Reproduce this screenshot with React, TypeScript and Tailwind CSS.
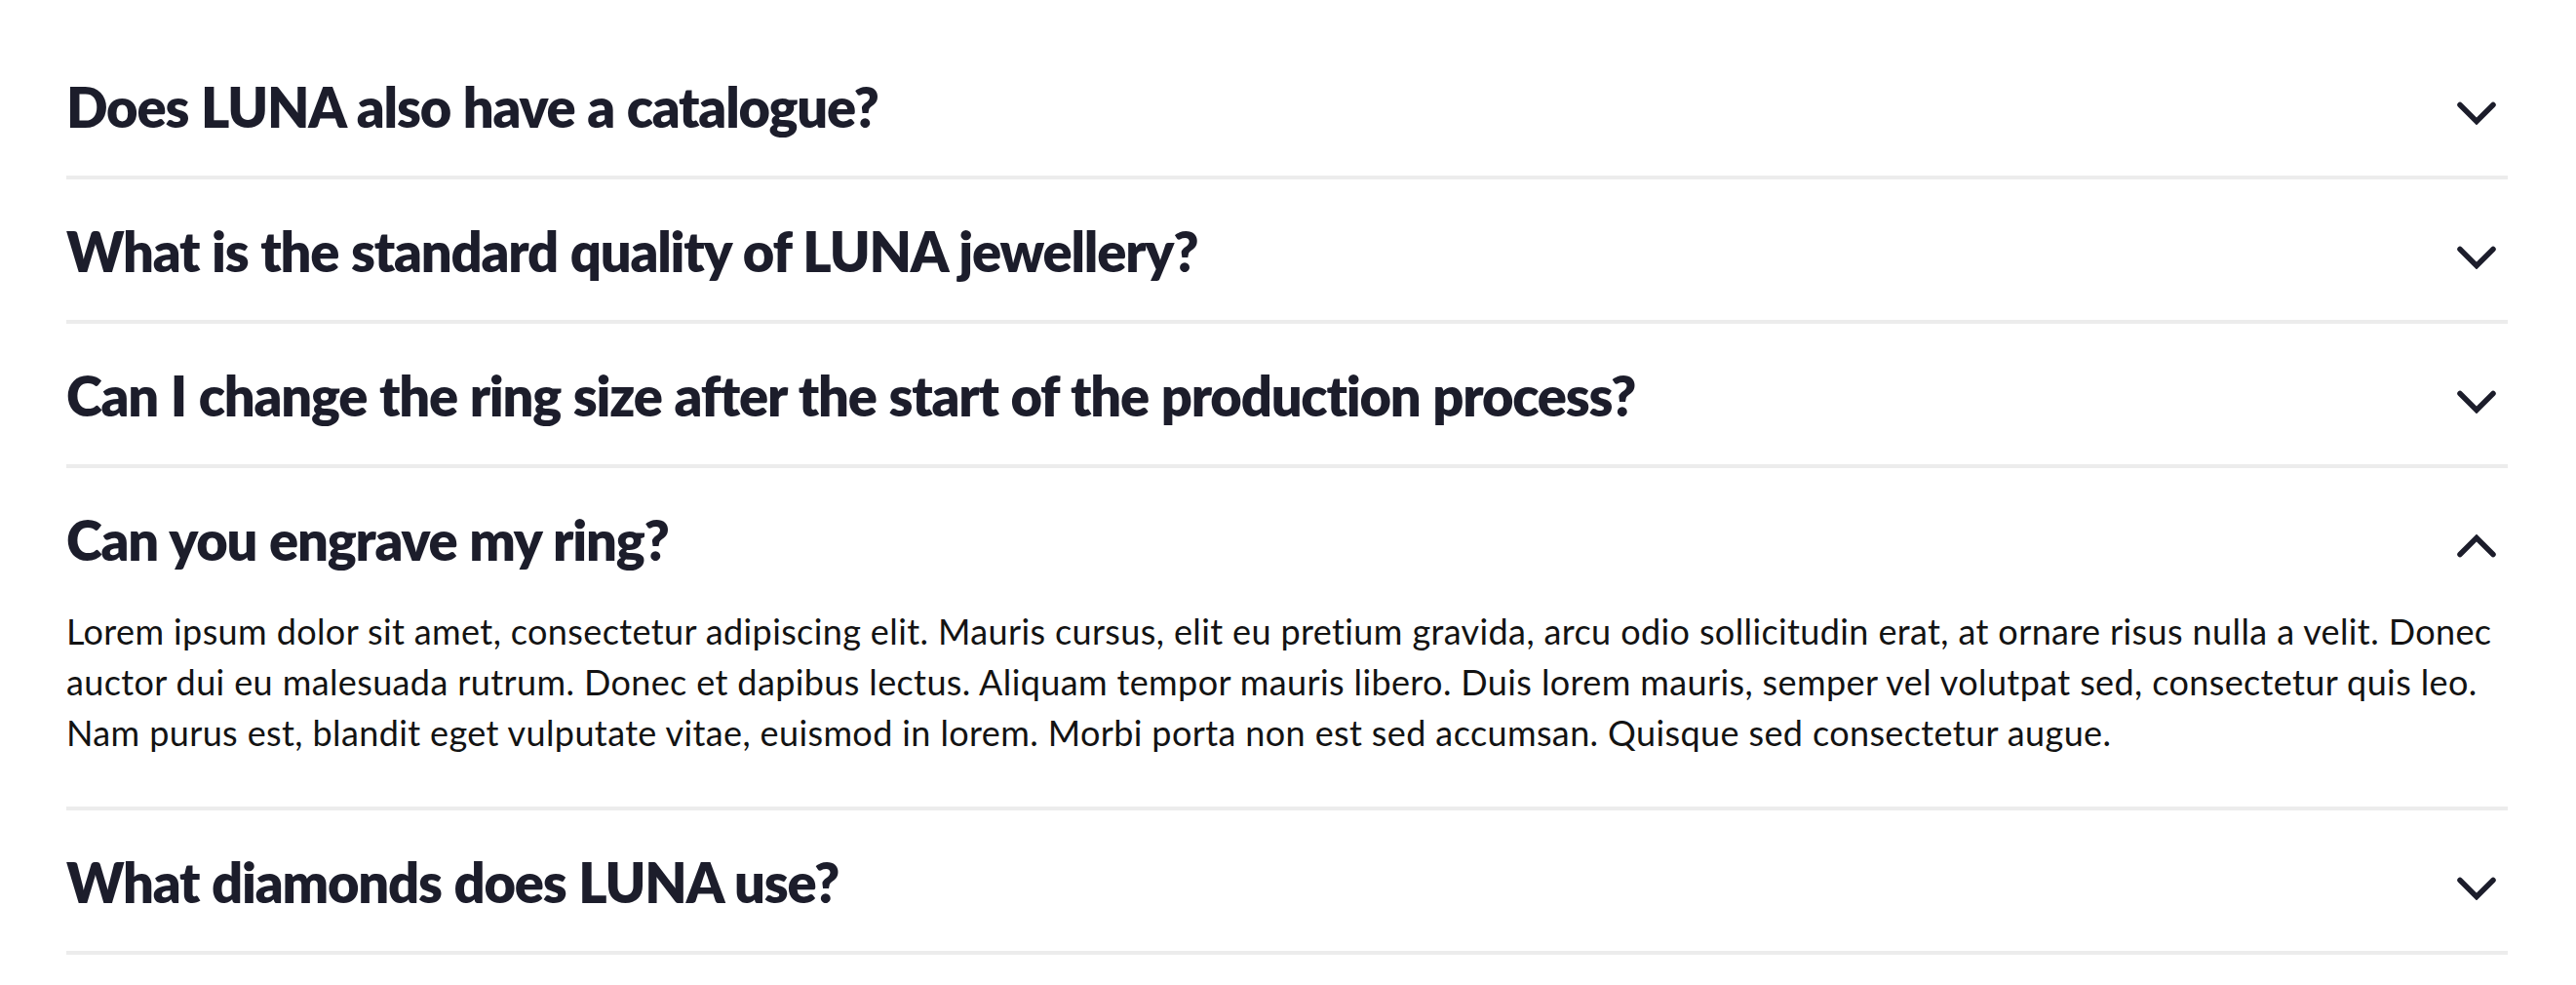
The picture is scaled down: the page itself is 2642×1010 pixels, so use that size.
import { useState } from "react";

const faqs = [
  {
    q: "Does LUNA also have a catalogue?",
    a: ["Lorem ipsum dolor sit amet, consectetur adipiscing elit."],
  },
  {
    q: "What is the standard quality of LUNA jewellery?",
    a: ["Lorem ipsum dolor sit amet, consectetur adipiscing elit."],
  },
  {
    q: "Can I change the ring size after the start of the production process?",
    a: ["Lorem ipsum dolor sit amet, consectetur adipiscing elit."],
  },
  {
    q: "Can you engrave my ring?",
    a: [
      "Lorem ipsum dolor sit amet, consectetur adipiscing elit. Mauris cursus, elit eu pretium gravida, arcu odio sollicitudin erat, at ornare risus nulla a velit. Donec",
      "auctor dui eu malesuada rutrum. Donec et dapibus lectus. Aliquam tempor mauris libero. Duis lorem mauris, semper vel volutpat sed, consectetur quis leo.",
      "Nam purus est, blandit eget vulputate vitae, euismod in lorem. Morbi porta non est sed accumsan. Quisque sed consectetur augue.",
    ],
  },
  {
    q: "What diamonds does LUNA use?",
    a: ["Lorem ipsum dolor sit amet, consectetur adipiscing elit."],
  },
];

const Chevron = ({ open }: { open: boolean }) => {
  return (
    <svg
      width="40"
      height="24"
      viewBox="0 0 40 24"
      fill="none"
      className={open ? "rotate-180" : ""}
    >
      <path
        d="M3 3.5 L20 20.5 L37 3.5"
        stroke="#1c1d2b"
        strokeWidth="5.5"
        strokeLinecap="round"
        strokeLinejoin="miter"
      />
    </svg>
  );
};

const FaqItem = ({
  q,
  a,
  open,
  onToggle,
}: {
  q: string;
  a: string[];
  open: boolean;
  onToggle: () => void;
}) => {
  return (
    <div className="border-b-4 border-[#ececec]">
      <button
        onClick={onToggle}
        className={`w-full flex items-center justify-between text-left pt-[40px] ${
          open ? "pb-[33px]" : "pb-[36px]"
        }`}
      >
        <h3 className="text-[56px] leading-[68px] font-extrabold text-[#1c1d2b] tracking-[-1.2px] [word-spacing:1px]">
          {q}
        </h3>
        <span className="mr-[12px] mt-[12px] flex">
          <Chevron open={open} />
        </span>
      </button>
      {open && (
        <p className="pb-[50px] text-[36px] leading-[52px] text-[#131313] tracking-[0.38px]">
          {a.map((line, i) => (
            <span key={i}>
              {line}
              {i < a.length - 1 && <br />}
            </span>
          ))}
        </p>
      )}
    </div>
  );
};

export default function App() {
  const [openIndex, setOpenIndex] = useState<number | null>(3);

  return (
    <div
      className="min-h-screen bg-white pl-[68px] pr-[70px] pt-[36px]"
      style={{ fontFamily: "Lato, 'Open Sans', sans-serif" }}
    >
      {faqs.map((item, i) => (
        <FaqItem
          key={i}
          q={item.q}
          a={item.a}
          open={openIndex === i}
          onToggle={() => setOpenIndex(openIndex === i ? null : i)}
        />
      ))}
    </div>
  );
}
